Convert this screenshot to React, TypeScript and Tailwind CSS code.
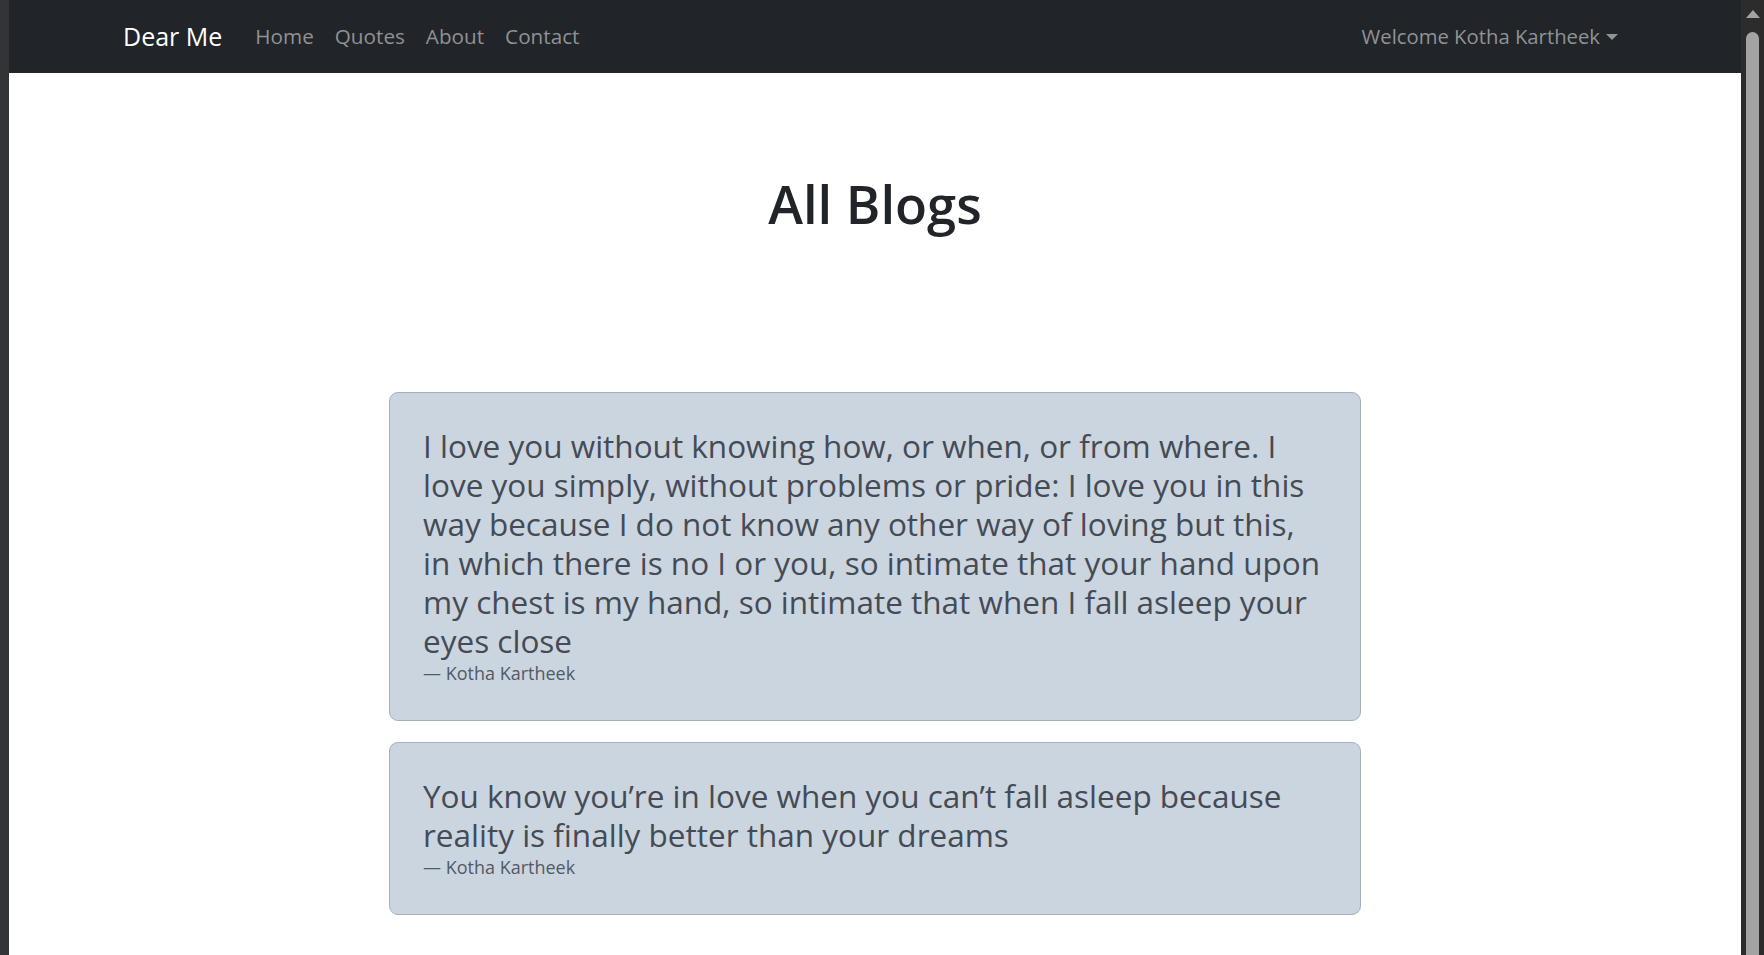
import React from "react";

const blogs = [
  {
    text: "I love you without knowing how, or when, or from where. I love you simply, without problems or pride: I love you in this way because I do not know any other way of loving but this, in which there is no I or you, so intimate that your hand upon my chest is my hand, so intimate that when I fall asleep your eyes close",
    author: "Kotha Kartheek",
  },
  {
    text: "You know you’re in love when you can’t fall asleep because reality is finally better than your dreams",
    author: "Kotha Kartheek",
  },
];

const Navbar = () => {
  return (
    <nav className="h-[73px] bg-[#212529] flex items-center justify-between pl-[114px] pr-[123px]">
      <div className="flex items-center">
        <a className="text-white text-[25px] mr-[33px]">Dear Me</a>
        <div className="flex items-center gap-[21px] text-[20.7px] text-[#909294]">
          <a>Home</a>
          <a>Quotes</a>
          <a>About</a>
          <a>Contact</a>
        </div>
      </div>
      <div className="flex items-center text-[20.3px] text-[#909294]">
        <span>Welcome Kotha Kartheek</span>
        <span className="ml-[6px] mt-[1px] w-0 h-0 border-l-[6px] border-r-[6px] border-t-[6px] border-l-transparent border-r-transparent border-t-[#909294]"></span>
      </div>
    </nav>
  );
};

const BlogCard = ({ text, author }: { text: string; author: string }) => {
  return (
    <div className="w-[972px] mx-auto bg-[#cbd5e0] border border-[#a5b0bd] rounded-[9px] pl-[33px] pr-[30px] pt-[33px] pb-[35px]">
      <p className="text-[31.5px] leading-[39px] font-medium text-[#454b54]">{text}</p>
      <p className="mt-[1px] text-[18px] leading-[24px] text-[#515a65]">— {author}</p>
    </div>
  );
};

const Scrollbar = () => {
  return (
    <div className="w-[23px] bg-[#2c2c2c] flex flex-col items-center pt-[10px]">
      <span className="w-0 h-0 border-l-[7px] border-r-[7px] border-b-[8px] border-l-transparent border-r-transparent border-b-[#a3a3a3]"></span>
      <div className="mt-[14px] w-[13px] flex-1 bg-[#a3a3a3] rounded-t-full"></div>
    </div>
  );
};

export default function App() {
  return (
    <div className="flex h-[955px] overflow-hidden" style={{ fontFamily: '"Open Sans", "Noto Sans", sans-serif' }}>
      <div className="w-[9px] bg-[#333438]"></div>
      <div className="flex-1 bg-white">
        <Navbar />
        <h1 className="mt-[97px] text-center text-[52.5px] leading-[67px] font-semibold text-[#212529]">All Blogs</h1>
        <div className="mt-[155px] flex flex-col gap-[21px]">
          {blogs.map((b, i) => (
            <BlogCard key={i} text={b.text} author={b.author} />
          ))}
        </div>
      </div>
      <Scrollbar />
    </div>
  );
}
